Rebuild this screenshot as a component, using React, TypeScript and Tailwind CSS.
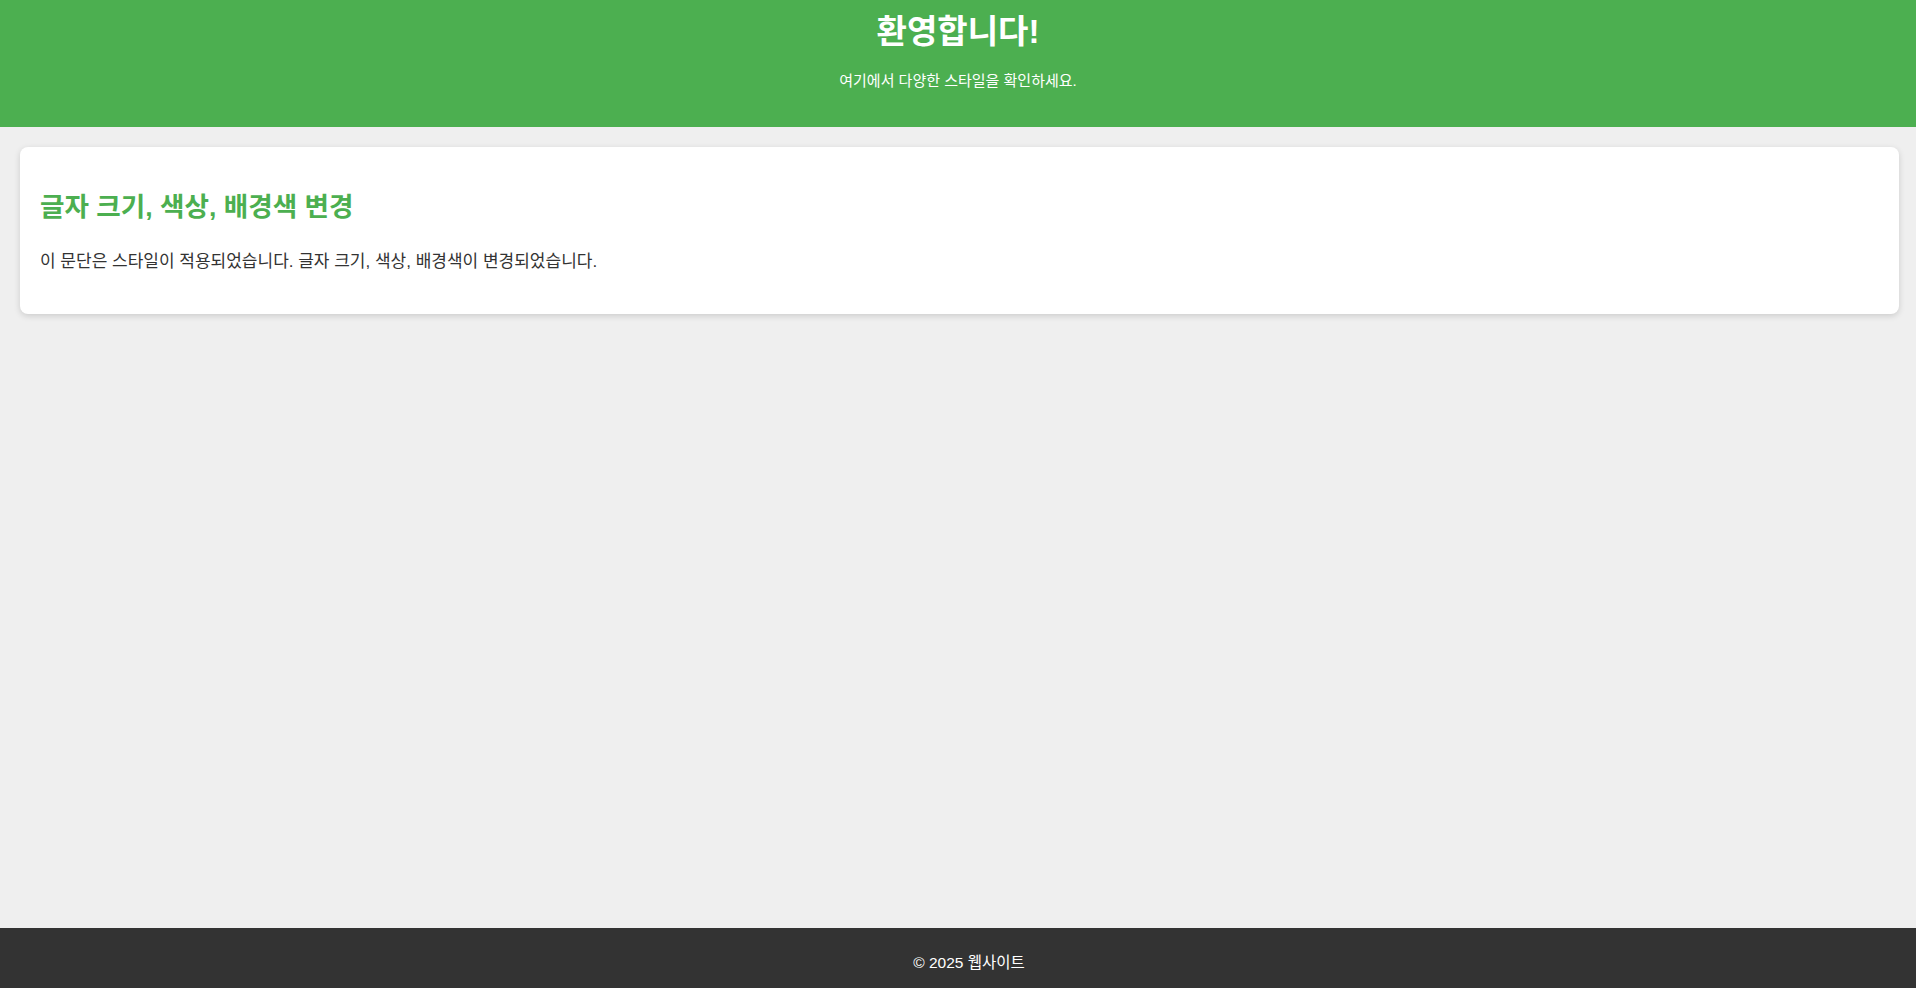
export default function App() {
    return (
        <div className="min-h-screen flex flex-col bg-[#efefef] font-['Liberation_Sans','Noto_Sans_CJK_KR',sans-serif]">

            {/* 헤더 */}
            <header className="bg-[#4caf50] text-white text-center pt-[13px] pb-[36px]">
                <h1 className="text-[33px] leading-[38px] font-bold">환영합니다!</h1>
                <p className="mt-[20px] text-[15px] leading-[20px]">여기에서 다양한 스타일을 확인하세요.</p>
            </header>

            {/* 본문 카드 */}
            <main className="flex-1 pl-[20px] pr-[17px] pt-[20px]">
                <section className="bg-white rounded-[8px] shadow-[0_2px_6px_rgba(0,0,0,0.15)] px-[20px] pt-[43px] pb-[40px]">
                    <h2 className="text-[26.6px] leading-[34px] font-bold text-[#4caf50]">글자 크기, 색상, 배경색 변경</h2>
                    <p className="mt-[26px] text-[17px] leading-[24px] text-[#333333]">
                        이 문단은 스타일이 적용되었습니다. 글자 크기, 색상, 배경색이 변경되었습니다.
                    </p>
                </section>
            </main>

            {/* 푸터 */}
            <footer className="bg-[#333333] text-white text-center h-[60px] pt-[9px] pl-[22px] flex items-center justify-center text-[15.5px]">
                © 2025 웹사이트
            </footer>
        </div>
    );
}
